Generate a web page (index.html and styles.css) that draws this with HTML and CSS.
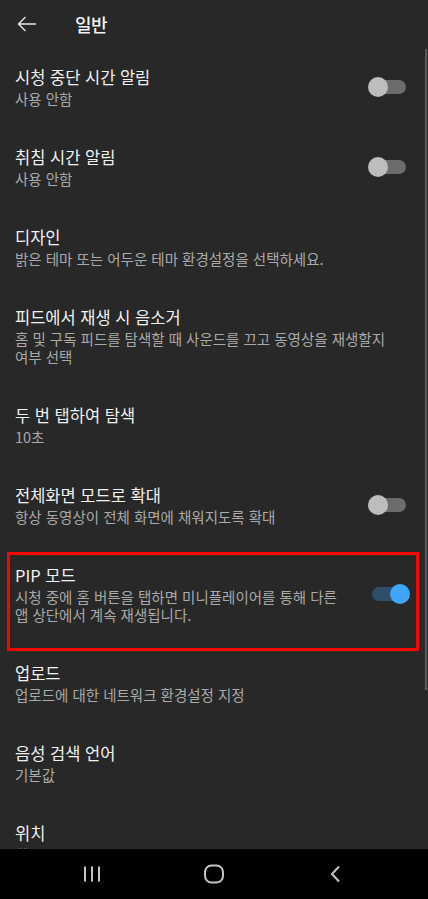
FILE: index.html
```html
<!DOCTYPE html>
<html lang="ko">
<head>
    <meta charset="UTF-8">
    <meta name="viewport" content="width=device-width, initial-scale=1.0">
    <title>일반</title>
    <link rel="stylesheet" href="styles.css">
</head>
<body>
    <div class="screen">
        <div class="header">
            <svg class="back" width="24" height="24" viewBox="0 0 24 24">
                <path d="M21 12H3.5M10.5 5l-7 7 7 7" fill="none" stroke="#e6e6e6" stroke-width="1.4"/>
            </svg>
            <h1>일반</h1>
        </div>

        <div class="list">
            <div class="item">
                <div class="text">
                    <div class="title">시청 중단 시간 알림</div>
                    <div class="sub">사용 안함</div>
                </div>
                <div class="switch"><span class="track"></span><span class="thumb"></span></div>
            </div>
            <div class="item">
                <div class="text">
                    <div class="title">취침 시간 알림</div>
                    <div class="sub">사용 안함</div>
                </div>
                <div class="switch"><span class="track"></span><span class="thumb"></span></div>
            </div>
            <div class="item">
                <div class="text">
                    <div class="title">디자인</div>
                    <div class="sub">밝은 테마 또는 어두운 테마 환경설정을 선택하세요.</div>
                </div>
            </div>
            <div class="item">
                <div class="text">
                    <div class="title">피드에서 재생 시 음소거</div>
                    <div class="sub">홈 및 구독 피드를 탐색할 때 사운드를 끄고 동영상을 재생할지<br>여부 선택</div>
                </div>
            </div>
            <div class="item">
                <div class="text">
                    <div class="title">두 번 탭하여 탐색</div>
                    <div class="sub">10초</div>
                </div>
            </div>
            <div class="item">
                <div class="text">
                    <div class="title">전체화면 모드로 확대</div>
                    <div class="sub">항상 동영상이 전체 화면에 채워지도록 확대</div>
                </div>
                <div class="switch"><span class="track"></span><span class="thumb"></span></div>
            </div>
            <div class="item marked">
                <div class="text">
                    <div class="title">PIP 모드</div>
                    <div class="sub">시청 중에 홈 버튼을 탭하면 미니플레이어를 통해 다른<br>앱 상단에서 계속 재생됩니다.</div>
                </div>
                <div class="switch on"><span class="track"></span><span class="thumb"></span></div>
                <div class="highlight"></div>
            </div>
            <div class="item">
                <div class="text">
                    <div class="title">업로드</div>
                    <div class="sub">업로드에 대한 네트워크 환경설정 지정</div>
                </div>
            </div>
            <div class="item">
                <div class="text">
                    <div class="title">음성 검색 언어</div>
                    <div class="sub">기본값</div>
                </div>
            </div>
            <div class="item">
                <div class="text">
                    <div class="title">위치</div>
                    <div class="sub">한국</div>
                </div>
            </div>
            <div class="scrollbar"></div>
        </div>

        <div class="navbar">
            <svg width="20" height="20" viewBox="0 0 20 20">
                <path d="M3 2.5v15M10 2.5v15M17 2.5v15" stroke="#c4c4c4" stroke-width="2"/>
            </svg>
            <svg width="22" height="22" viewBox="0 0 22 22">
                <rect x="2" y="2.5" width="18" height="17" rx="6.5" fill="none" stroke="#c4c4c4" stroke-width="2"/>
            </svg>
            <svg width="20" height="20" viewBox="0 0 20 20">
                <path d="M14 2.5l-7 7.5 7 7.5" fill="none" stroke="#c4c4c4" stroke-width="2"/>
            </svg>
        </div>
    </div>
</body>
</html>
```

FILE: styles.css
```css
* {
    box-sizing: border-box;
}
body {
    margin: 0;
    background-color: #282828;
    font-family: "Noto Sans CJK KR", "Noto Sans", sans-serif;
    color: #f1f1f1;
}
.screen {
    display: flex;
    flex-direction: column;
    height: 899px;
}
.header {
    display: flex;
    align-items: center;
    height: 47px;
    padding-left: 15px;
    flex-shrink: 0;
}
.back {
    display: block;
}
.header h1 {
    margin: 0 0 0 36px;
    font-size: 18px;
    font-weight: 500;
    letter-spacing: -0.5px;
}
.list {
    position: relative;
    flex: 1;
    overflow: hidden;
}
.item {
    position: relative;
    display: flex;
    align-items: center;
    padding: 19px 18px 19px 15px;
}
.text {
    flex: 1;
}
.title {
    font-size: 16.5px;
    line-height: 22px;
}
.sub {
    margin-top: 2px;
    font-size: 14.5px;
    line-height: 18px;
    color: #aaaaaa;
}
.switch {
    position: relative;
    width: 42px;
    height: 20px;
    flex-shrink: 0;
}
.track {
    position: absolute;
    left: 4px;
    top: 3px;
    width: 34px;
    height: 14px;
    border-radius: 7px;
    background: #6c6c6c;
}
.thumb {
    position: absolute;
    left: 0;
    top: 0;
    width: 20px;
    height: 20px;
    border-radius: 50%;
    background: #bdbdbd;
}
.switch.on .track {
    background: #2f4e69;
}
.switch.on .thumb {
    left: 22px;
    background: #3ea6ff;
}
.highlight {
    position: absolute;
    left: 7px;
    right: 9px;
    top: 7px;
    height: 99px;
    border: 3px solid #ff0000;
}
.scrollbar {
    position: absolute;
    right: 1px;
    top: 2px;
    width: 2px;
    height: 641px;
    background: #5a5a5a;
}
.navbar {
    display: flex;
    justify-content: space-between;
    align-items: center;
    height: 50px;
    flex-shrink: 0;
    background: #000;
    padding: 0 83px 0 82px;
}
.navbar svg {
    display: block;
}
```
